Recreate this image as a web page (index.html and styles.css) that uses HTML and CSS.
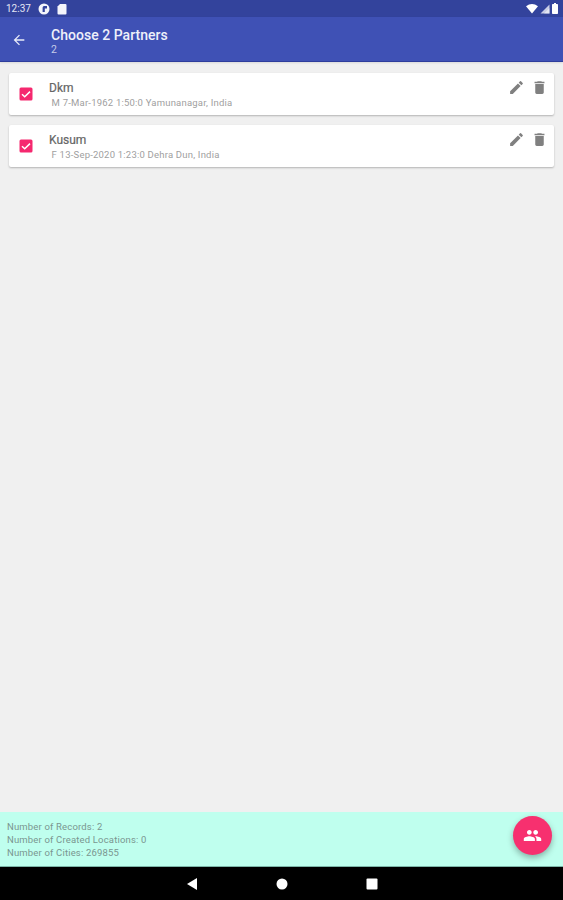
FILE: index.html
```html
<!DOCTYPE html>
<html lang="en">
<head>
<meta charset="utf-8">
<title>Choose 2 Partners</title>
<link rel="stylesheet" href="styles.css">
</head>
<body>
<div class="app">
  <div class="statusbar">
    <div class="status-left">
      <span class="time">12:37</span>
      <svg class="st-icon" viewBox="0 0 12 12" width="12" height="12"><circle cx="6" cy="6" r="5.5" fill="#f4f5fb"/><path d="M6 3h3v2.400H6.800V9H4.600V5.200C4.600 4 5 3 6 3z" fill="#33439c"/></svg>
      <svg class="st-icon" viewBox="0 0 10 12" width="10" height="12"><path d="M3 1h5.500a1 1 0 0 1 1 1v8.500a1 1 0 0 1-1 1h-7a1 1 0 0 1-1-1V3.500z" fill="#f4f5fb"/></svg>
    </div>
    <div class="status-right">
      <svg viewBox="0 0 12 10" width="12" height="10"><path d="M0 2.200Q6-2 12 2.200L6 9.500z" fill="#fff"/></svg>
      <svg viewBox="0 0 10 10" width="10" height="10"><path d="M9.500 0.500V9.500H0.500z" fill="#c9cde6"/><path d="M9.500 4V9.500H4z" fill="#fff" opacity=".5"/></svg>
      <svg viewBox="0 0 6 11" width="6" height="11"><path d="M2 0h2v1h1.200a.8.8 0 0 1 .8.8v8.400a.8.8 0 0 1-.8.8H.8a.8.8 0 0 1-.8-.8V1.800a.8.8 0 0 1 .8-.8H2z" fill="#fff"/></svg>
    </div>
  </div>
  <header class="appbar">
    <svg class="back" viewBox="0 0 24 24" width="16" height="16"><path d="M20 11H7.830l5.590-5.590L12 4l-8 8 8 8 1.410-1.410L7.830 13H20z" fill="#e8ebf8"/></svg>
    <div class="titles">
      <div class="title">Choose 2 Partners</div>
      <div class="subtitle">2</div>
    </div>
  </header>
  <main class="list">
    <div class="card">
      <span class="check"><svg viewBox="0 0 14 14" width="14" height="14"><rect width="13" height="13" x=".5" y=".5" rx="1.500" fill="#f5286f"/><path d="M3 7.200l2.700 2.600L11 4.600" fill="none" stroke="#fff" stroke-width="1.500"/></svg></span>
      <div class="info">
        <div class="name">Dkm</div>
        <div class="details">&nbsp;M 7-Mar-1962 1:50:0 Yamunanagar, India</div>
      </div>
      <div class="actions">
        <svg viewBox="0 0 24 24" width="17" height="17"><path d="M3 17.250V21h3.750L17.810 9.940l-3.750-3.750L3 17.250zM20.710 7.040a1 1 0 0 0 0-1.410l-2.340-2.340a1 1 0 0 0-1.410 0l-1.830 1.830 3.750 3.750 1.830-1.830z" fill="#808080"/></svg>
        <svg viewBox="0 0 24 24" width="17" height="17"><path d="M6 19c0 1.100.9 2 2 2h8c1.100 0 2-.9 2-2V7H6v12zM19 4h-3.500l-1-1h-5l-1 1H5v2h14V4z" fill="#808080"/></svg>
      </div>
    </div>
    <div class="card">
      <span class="check"><svg viewBox="0 0 14 14" width="14" height="14"><rect width="13" height="13" x=".5" y=".5" rx="1.500" fill="#f5286f"/><path d="M3 7.200l2.700 2.600L11 4.600" fill="none" stroke="#fff" stroke-width="1.500"/></svg></span>
      <div class="info">
        <div class="name">Kusum</div>
        <div class="details">&nbsp;F 13-Sep-2020 1:23:0 Dehra Dun, India</div>
      </div>
      <div class="actions">
        <svg viewBox="0 0 24 24" width="17" height="17"><path d="M3 17.250V21h3.750L17.810 9.940l-3.750-3.750L3 17.250zM20.710 7.040a1 1 0 0 0 0-1.410l-2.340-2.340a1 1 0 0 0-1.410 0l-1.830 1.830 3.750 3.750 1.830-1.830z" fill="#808080"/></svg>
        <svg viewBox="0 0 24 24" width="17" height="17"><path d="M6 19c0 1.100.9 2 2 2h8c1.100 0 2-.9 2-2V7H6v12zM19 4h-3.500l-1-1h-5l-1 1H5v2h14V4z" fill="#808080"/></svg>
      </div>
    </div>
  </main>
  <footer class="footer">
    <div>Number of Records: 2</div>
    <div>Number of Created Locations: 0</div>
    <div>Number of Cities: 269855</div>
    <button class="fab" type="button" aria-label="Partners">
      <svg viewBox="0 0 24 24" width="19" height="19"><path d="M16 11c1.660 0 2.990-1.340 2.990-3S17.660 5 16 5s-3 1.340-3 3 1.340 3 3 3zm-8 0c1.660 0 2.990-1.340 2.990-3S9.660 5 8 5 5 6.340 5 8s1.340 3 3 3zm0 2c-2.330 0-7 1.170-7 3.500V19h14v-2.500C15 14.170 10.330 13 8 13zm8 0c-.29 0-.62.020-.97.050 1.160.84 1.970 1.970 1.970 3.450V19h6v-2.500c0-2.330-4.670-3.500-7-3.500z" fill="#fff"/></svg>
    </button>
  </footer>
  <nav class="navbar">
    <svg viewBox="0 0 12 14" width="12" height="14"><path d="M11 1v12L1 7z" fill="#fff"/></svg>
    <svg viewBox="0 0 12 12" width="12" height="12"><circle cx="6" cy="6" r="5.500" fill="#fff"/></svg>
    <svg viewBox="0 0 12 12" width="12" height="12"><rect x=".5" y=".5" width="11" height="11" rx="1" fill="#fff"/></svg>
  </nav>
</div>
</body>
</html>
```
FILE: styles.css
```css
* { box-sizing: border-box; }
html, body { margin: 0; padding: 0; }
body { font-family: Roboto, "Liberation Sans", sans-serif; }
.app {
  width: 563px;
  height: 900px;
  display: flex;
  flex-direction: column;
  background: #f0f0f0;
  overflow: hidden;
}
.statusbar {
  height: 17px;
  flex: none;
  background: #33439c;
  display: flex;
  justify-content: space-between;
  align-items: center;
  padding: 0 5px 0 6px;
  color: #e4e6f4;
  font-size: 10px;
}
.status-left { display: flex; align-items: center; gap: 7px; }
.status-right { display: flex; align-items: center; gap: 2px; }
.appbar {
  height: 45px;
  flex: none;
  background: #3f51b5;
  border-bottom: 1px solid #2e3d9c;
  display: flex;
  align-items: center;
  padding: 1px 0 0 11px;
  box-shadow: 0 1px 2px rgba(0,0,0,.1);
}
.back { flex: none; margin-right: 24px; }
.titles { display: flex; flex-direction: column; margin-top: 3px; }
.title { color: #eef0fa; font-size: 14px; font-weight: 500; line-height: 17px; letter-spacing: .03px; }
.subtitle { color: #c5cbe9; font-size: 10.500px; line-height: 12px; }
.list {
  flex: 1;
  padding: 11px 9px 0 9px;
  display: flex;
  flex-direction: column;
  gap: 10px;
}
.card {
  height: 42px;
  background: #fff;
  border-radius: 2px;
  box-shadow: 0 1px 2px rgba(0,0,0,.25);
  display: flex;
  padding-left: 10px;
}
.check { flex: none; width: 14px; height: 14px; margin-top: 14px; display: block; }
.check svg { display: block; }
.info { margin-left: 16px; padding-top: 8px; }
.name { color: #666; font-size: 12px; font-weight: 400; line-height: 15px; -webkit-text-stroke: .2px #666; }
.details { color: #a0a0a0; font-size: 9.500px; line-height: 12px; margin-top: 1px; white-space: nowrap; letter-spacing: .21px; }
.actions {
  margin-left: auto;
  display: flex;
  gap: 6px;
  padding: 6px 6px 0 0;
  align-items: flex-start;
}
.footer {
  height: 55px;
  flex: none;
  background: #bfffee;
  border-bottom: 1px solid #7cb5a8;
  padding: 8px 0 0 7px;
  color: #7a9690;
  font-size: 9.500px;
  letter-spacing: .17px;
  line-height: 13px;
  position: relative;
}
.fab {
  position: absolute;
  right: 11px;
  top: 4px;
  width: 39px;
  height: 39px;
  border: 0;
  padding: 0;
  border-radius: 50%;
  background: #f7306f;
  box-shadow: 0 3px 6px rgba(0,0,0,.3);
  display: flex;
  align-items: center;
  justify-content: center;
}
.navbar {
  height: 33px;
  flex: none;
  background: #000;
  display: flex;
  align-items: center;
  justify-content: center;
  gap: 78px;
}
```
